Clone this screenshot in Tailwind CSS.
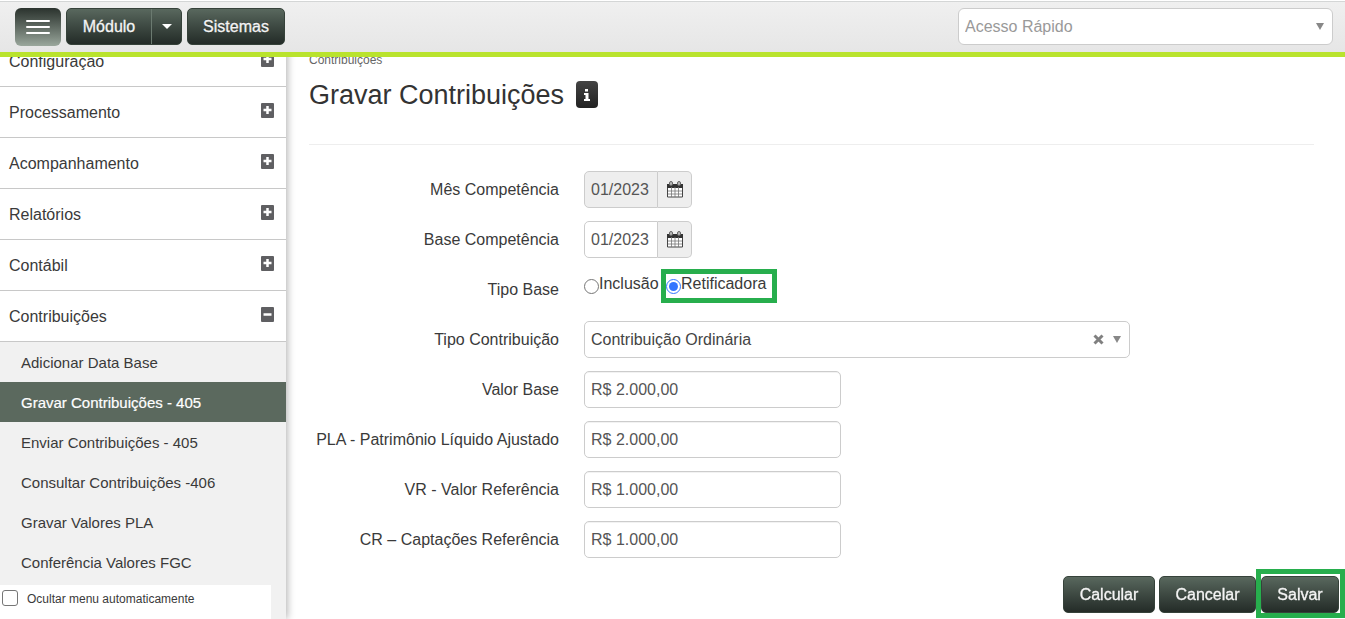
<!DOCTYPE html>
<html lang="pt-BR">
<head>
    <meta charset="UTF-8">
    <meta name="viewport" content="width=device-width, initial-scale=1.0">
    <title>Gravar Contribuições</title>
    <script src="https://cdn.jsdelivr.net/npm/@tailwindcss/browser@4"></script>
</head>
<body class="bg-white font-['Liberation_Sans',Arial,sans-serif] text-base text-[#3a3a3a] h-screen overflow-hidden">

    <!-- Top bar -->
    <header class="fixed inset-x-0 top-0 z-20 flex items-start justify-between h-[57px] pt-2 pl-[15px] pr-3 bg-linear-to-b from-[#f0f0f0] to-[#e6e6e6] border-b-5 border-[#b9e32d]">
        <div class="absolute inset-x-0 top-0 h-[2px] bg-white border-b border-[#d4d6d6]"></div>
        <div class="flex gap-[5px]">
            <button type="button" aria-label="Menu" class="flex items-center justify-center w-[46px] h-[38px] rounded-md bg-linear-to-b from-[#2b332e] to-[#9aa79c]">
                <svg width="24" height="16" viewBox="0 0 24 16" stroke="#fff" stroke-width="2" stroke-linecap="round"><path d="M1 2h22M1 8h22M1 14h22"/></svg>
            </button>
            <div class="flex h-[37px] rounded-[5px] overflow-hidden border border-[#36423a] bg-linear-to-b from-[#59685e] to-[#242c28] text-[#f4f4f4] [text-shadow:0_-1px_0_#0004] [-webkit-text-stroke:0.3px]">
                <button type="button" class="w-[85px] border-r border-[#6b7a70]">Módulo</button>
                <button type="button" aria-label="Abrir módulos" class="flex items-center justify-center w-[29px]">
                    <svg width="10" height="5" viewBox="0 0 10 5" fill="#fff"><path d="M0 0h10L5 5z"/></svg>
                </button>
            </div>
            <button type="button" class="w-[98px] h-[37px] rounded-[5px] border border-[#36423a] bg-linear-to-b from-[#59685e] to-[#242c28] text-[#f4f4f4] [text-shadow:0_-1px_0_#0004] [-webkit-text-stroke:0.3px]">Sistemas</button>
        </div>
        <div class="relative w-[375px]">
            <select aria-label="Acesso Rápido" class="appearance-none w-full h-[37px] pl-[6px] rounded-md border border-[#ccc] bg-white text-[#999]">
                <option>Acesso Rápido</option>
            </select>
            <svg class="absolute right-[9px] top-[15px] pointer-events-none" width="8" height="7" viewBox="0 0 8 7" fill="#888"><path d="M0 0h8L4 7z"/></svg>
        </div>
    </header>

    <div class="flex h-full pt-9">
        <!-- Side menu -->
        <nav class="relative z-10 w-[286px] shrink-0 bg-[#f1f1f1] shadow-[1px_0_8px_#0005]">
            <a href="#" class="flex justify-between h-[51px] pl-[9px] pr-3 pt-[14px] bg-white border-b border-[#c8c8c8]">Configuração
                <svg class="mt-[2px]" width="13" height="15" viewBox="0 0 13 15"><rect width="13" height="15" rx="1" fill="#5f5f62"/><path d="M2.500 7h8M6.500 3v8" stroke="#fff" stroke-width="2.500"/></svg>
            </a>
            <a href="#" class="flex justify-between h-[51px] pl-[9px] pr-3 pt-[14px] bg-white border-b border-[#c8c8c8]">Processamento
                <svg class="mt-[2px]" width="13" height="15" viewBox="0 0 13 15"><rect width="13" height="15" rx="1" fill="#5f5f62"/><path d="M2.500 7h8M6.500 3v8" stroke="#fff" stroke-width="2.500"/></svg>
            </a>
            <a href="#" class="flex justify-between h-[51px] pl-[9px] pr-3 pt-[14px] bg-white border-b border-[#c8c8c8]">Acompanhamento
                <svg class="mt-[2px]" width="13" height="15" viewBox="0 0 13 15"><rect width="13" height="15" rx="1" fill="#5f5f62"/><path d="M2.500 7h8M6.500 3v8" stroke="#fff" stroke-width="2.500"/></svg>
            </a>
            <a href="#" class="flex justify-between h-[51px] pl-[9px] pr-3 pt-[14px] bg-white border-b border-[#c8c8c8]">Relatórios
                <svg class="mt-[2px]" width="13" height="15" viewBox="0 0 13 15"><rect width="13" height="15" rx="1" fill="#5f5f62"/><path d="M2.500 7h8M6.500 3v8" stroke="#fff" stroke-width="2.500"/></svg>
            </a>
            <a href="#" class="flex justify-between h-[51px] pl-[9px] pr-3 pt-[14px] bg-white border-b border-[#c8c8c8]">Contábil
                <svg class="mt-[2px]" width="13" height="15" viewBox="0 0 13 15"><rect width="13" height="15" rx="1" fill="#5f5f62"/><path d="M2.500 7h8M6.500 3v8" stroke="#fff" stroke-width="2.500"/></svg>
            </a>
            <a href="#" class="flex justify-between h-[51px] pl-[9px] pr-3 pt-[14px] bg-white border-b border-[#c8c8c8]">Contribuições
                <svg class="mt-[2px]" width="13" height="15" viewBox="0 0 13 15"><rect width="13" height="15" rx="1" fill="#5f5f62"/><path d="M2.500 7.500h8" stroke="#fff" stroke-width="2.500"/></svg>
            </a>
            <div class="text-[15px] leading-[38px]">
                <a href="#" class="block pt-[2px] pl-[21px]">Adicionar Data Base</a>
                <a href="#" class="block pt-[2px] pl-[21px] bg-[#5b695e] text-white [-webkit-text-stroke:0.2px]">Gravar Contribuições - 405</a>
                <a href="#" class="block pt-[2px] pl-[21px]">Enviar Contribuições - 405</a>
                <a href="#" class="block pt-[2px] pl-[21px]">Consultar Contribuições -406</a>
                <a href="#" class="block pt-[2px] pl-[21px]">Gravar Valores PLA</a>
                <a href="#" class="block pt-[2px] pl-[21px]">Conferência Valores FGC</a>
            </div>
            <label class="absolute bottom-0 left-0 flex items-start gap-[9px] w-[271px] h-[34px] pt-[5px] pl-[2px] bg-white text-xs leading-[18px]">
                <input type="checkbox" class="appearance-none size-4 rounded-[3px] border border-[#767676] bg-white">
                Ocultar menu automaticamente
            </label>
        </nav>

        <!-- Content -->
        <main class="flex-1 pl-[23px] pr-[31px] pt-4">
            <p class="text-xs text-[#666]">Contribuições</p>
            <div class="flex items-center gap-3 h-[77px] pb-[23px] border-b border-[#eee]">
                <h1 class="text-[27px] leading-8 text-[#333]">Gravar Contribuições</h1>
                <button type="button" aria-label="Informações" class="flex items-center justify-center w-[22px] h-[27px] rounded-[4px] bg-linear-to-b from-[#444] to-[#222]">
                    <svg width="8" height="12" viewBox="0 0 8 12" fill="#fff"><path d="M2 0h3v2.500H2zM1 4h4.500v6H7v2H1v-2h1.500V6H1z"/></svg>
                </button>
            </div>

            <form class="grid grid-cols-[250px_1fr] auto-rows-[37px] gap-x-[25px] gap-y-[13px] items-center pt-[26px]">
                <label for="mes" class="text-right">Mês Competência</label>
                <div class="flex h-[37px]">
                    <input id="mes" type="text" value="01/2023" readonly class="w-[74px] pl-[6px] rounded-l-[5px] border border-[#ccc] bg-[#eee] text-[#555]">
                    <button type="button" aria-label="Abrir calendário" class="flex items-center justify-center w-[34px] rounded-r-[5px] border border-l-0 border-[#ccc] bg-[#eee]">
                        <svg width="16" height="17" viewBox="0 0 16 17"><path d="M.5 5h15v11H.5z" fill="#fff" stroke="#444"/><path d="M0 3h16v4H0z" fill="#333"/><path d="M4.500 6v10M8 6v10M11.500 6v10M1 10h14M1 13h14" stroke="#777" stroke-width=".8"/><rect x="2.500" y=".5" width="3" height="4" rx="1.500" fill="#bbb" stroke="#666"/><rect x="10.500" y=".5" width="3" height="4" rx="1.500" fill="#bbb" stroke="#666"/></svg>
                    </button>
                </div>

                <label for="base" class="text-right">Base Competência</label>
                <div class="flex h-[37px]">
                    <input id="base" type="text" value="01/2023" class="w-[74px] pl-[6px] rounded-l-[5px] border border-[#ccc] bg-white text-[#555]">
                    <button type="button" aria-label="Abrir calendário" class="flex items-center justify-center w-[34px] rounded-r-[5px] border border-l-0 border-[#ccc] bg-[#eee]">
                        <svg width="16" height="17" viewBox="0 0 16 17"><path d="M.5 5h15v11H.5z" fill="#fff" stroke="#444"/><path d="M0 3h16v4H0z" fill="#333"/><path d="M4.500 6v10M8 6v10M11.500 6v10M1 10h14M1 13h14" stroke="#777" stroke-width=".8"/><rect x="2.500" y=".5" width="3" height="4" rx="1.500" fill="#bbb" stroke="#666"/><rect x="10.500" y=".5" width="3" height="4" rx="1.500" fill="#bbb" stroke="#666"/></svg>
                    </button>
                </div>

                <span class="text-right">Tipo Base</span>
                <div class="flex items-center h-[30px] mb-2 leading-5">
                    <label class="flex items-start w-[77px] h-[34px] border-y-5 border-transparent"><input type="radio" name="tipo" class="size-[15px] mt-[5px] shrink-0">Inclusão</label>
                    <label class="flex items-start w-[116px] h-[34px] border-5 border-[#27ae4d]"><input type="radio" name="tipo" checked class="size-[15px] mt-[5px] shrink-0 accent-[#3375ff]">Retificadora</label>
                </div>

                <label for="contribuicao" class="text-right">Tipo Contribuição</label>
                <div class="relative w-[546px]">
                    <select id="contribuicao" class="appearance-none block w-full h-[37px] pl-[6px] rounded-[5px] border border-[#ccc] bg-white text-[#444]">
                        <option>Contribuição Ordinária</option>
                    </select>
                    <button type="button" aria-label="Limpar" class="absolute right-[26px] top-[13px]">
                        <svg width="11" height="11" viewBox="0 0 11 11" stroke="#808080" stroke-width="3"><path d="M1.500 1.500l8 8M9.500 1.500l-8 8"/></svg>
                    </button>
                    <svg class="absolute right-[9px] top-[15px] pointer-events-none" width="8" height="7" viewBox="0 0 8 7" fill="#888"><path d="M0 0h8L4 7z"/></svg>
                </div>

                <label for="valor" class="text-right">Valor Base</label>
                <input id="valor" type="text" value="R$ 2.000,00" class="w-[257px] h-[37px] px-[6px] rounded-[5px] border border-[#ccc] text-[#555] inset-shadow-2xs">

                <label for="pla" class="text-right whitespace-nowrap">PLA - Patrimônio Líquido Ajustado</label>
                <input id="pla" type="text" value="R$ 2.000,00" class="w-[257px] h-[37px] px-[6px] rounded-[5px] border border-[#ccc] text-[#555] inset-shadow-2xs">

                <label for="vr" class="text-right">VR - Valor Referência</label>
                <input id="vr" type="text" value="R$ 1.000,00" class="w-[257px] h-[37px] px-[6px] rounded-[5px] border border-[#ccc] text-[#555] inset-shadow-2xs">

                <label for="cr" class="text-right">CR – Captações Referência</label>
                <input id="cr" type="text" value="R$ 1.000,00" class="w-[257px] h-[37px] px-[6px] rounded-[5px] border border-[#ccc] text-[#555] inset-shadow-2xs">
            </form>
        </main>
    </div>

    <!-- Form actions -->
    <div class="fixed right-0 bottom-px flex items-end text-[#f4f4f4] [text-shadow:0_-1px_0_#0004] [-webkit-text-stroke:0.3px]">
        <div class="flex gap-1 pb-[5px]">
            <button type="button" class="w-[92px] h-[37px] rounded-[5px] border border-[#36423a] bg-linear-to-b from-[#59685e] to-[#242c28]">Calcular</button>
            <button type="button" class="w-[97px] h-[37px] rounded-[5px] border border-[#36423a] bg-linear-to-b from-[#59685e] to-[#242c28]">Cancelar</button>
        </div>
        <div class="flex items-end w-[89px] h-[49px] border-5 border-[#27ae4d] bg-white">
            <button type="button" class="w-[78px] h-[37px] rounded-[5px] border border-[#36423a] bg-linear-to-b from-[#59685e] to-[#242c28]">Salvar</button>
        </div>
    </div>

</body>
</html>
